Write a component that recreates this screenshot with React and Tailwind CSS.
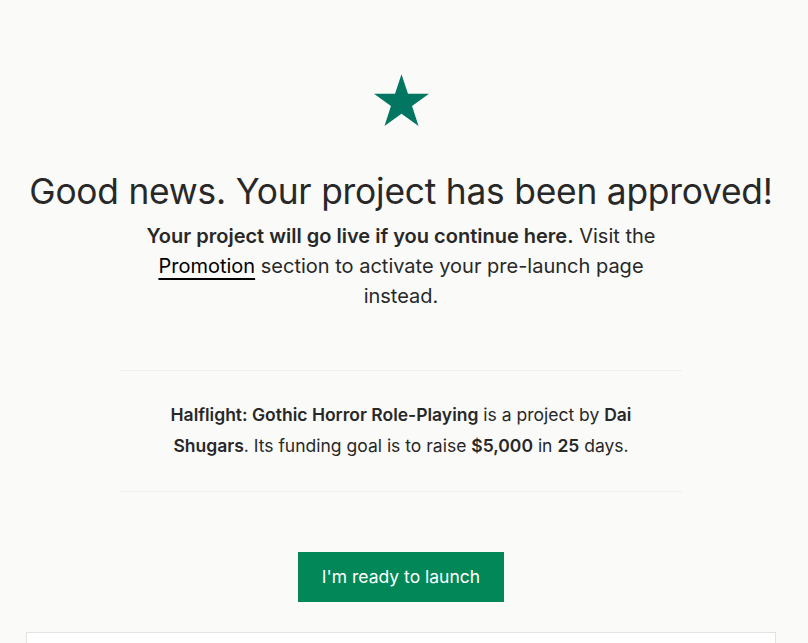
import React from 'react';

const App = () => {
  return (
    <div className="min-h-screen bg-[#fafaf8] text-[#282828] font-['Inter',sans-serif] overflow-hidden">
      <div className="flex flex-col items-center pt-[74px] pr-[6px]">
        <svg width="55" height="53" viewBox="0 0 24 23" className="block">
          <path d="M12 0l2.83 8.6H24l-7.4 5.35 2.83 8.65L12 17.25 4.57 22.6l2.83-8.65L0 8.6h9.17z" fill="#027661" />
        </svg>

        <h1 className="mt-[43px] text-[35.3px] leading-[44px] font-normal tracking-[-0.2px] text-center whitespace-nowrap">
          Good news. Your project has been approved!
        </h1>
        <p className="mt-[7px] max-w-[540px] text-center text-[20px] leading-[30px]">
          <b className="font-semibold">Your project will go live if you continue here.</b> Visit the{' '}
          <span className="underline underline-offset-[5px] text-black">Promotion</span> section to activate your pre-launch page instead.
        </p>

        <div className="mt-[59px] w-[562px] border-t border-[#efefed] pt-[28px] pb-[30px] flex justify-center">
          <p className="max-w-[490px] text-center text-[17.5px] leading-[31px]">
            <b className="font-semibold">Halflight: Gothic Horror Role-Playing</b> is a project by{' '}
            <b className="font-semibold">Dai Shugars</b>. Its funding goal is to raise <b className="font-semibold">$5,000</b> in{' '}
            <b className="font-semibold">25</b> days.
          </p>
        </div>
        <div className="w-[562px] border-t border-[#efefed]" />

        <button className="mt-[60px] w-[206px] h-[50px] bg-[#028858] text-white text-[17.5px]">
          I'm ready to launch
        </button>

        <div className="mt-[30px] w-[750px] h-[40px] bg-white border border-[#e3e3e1]" />
      </div>
    </div>
  );
};

export default App;
